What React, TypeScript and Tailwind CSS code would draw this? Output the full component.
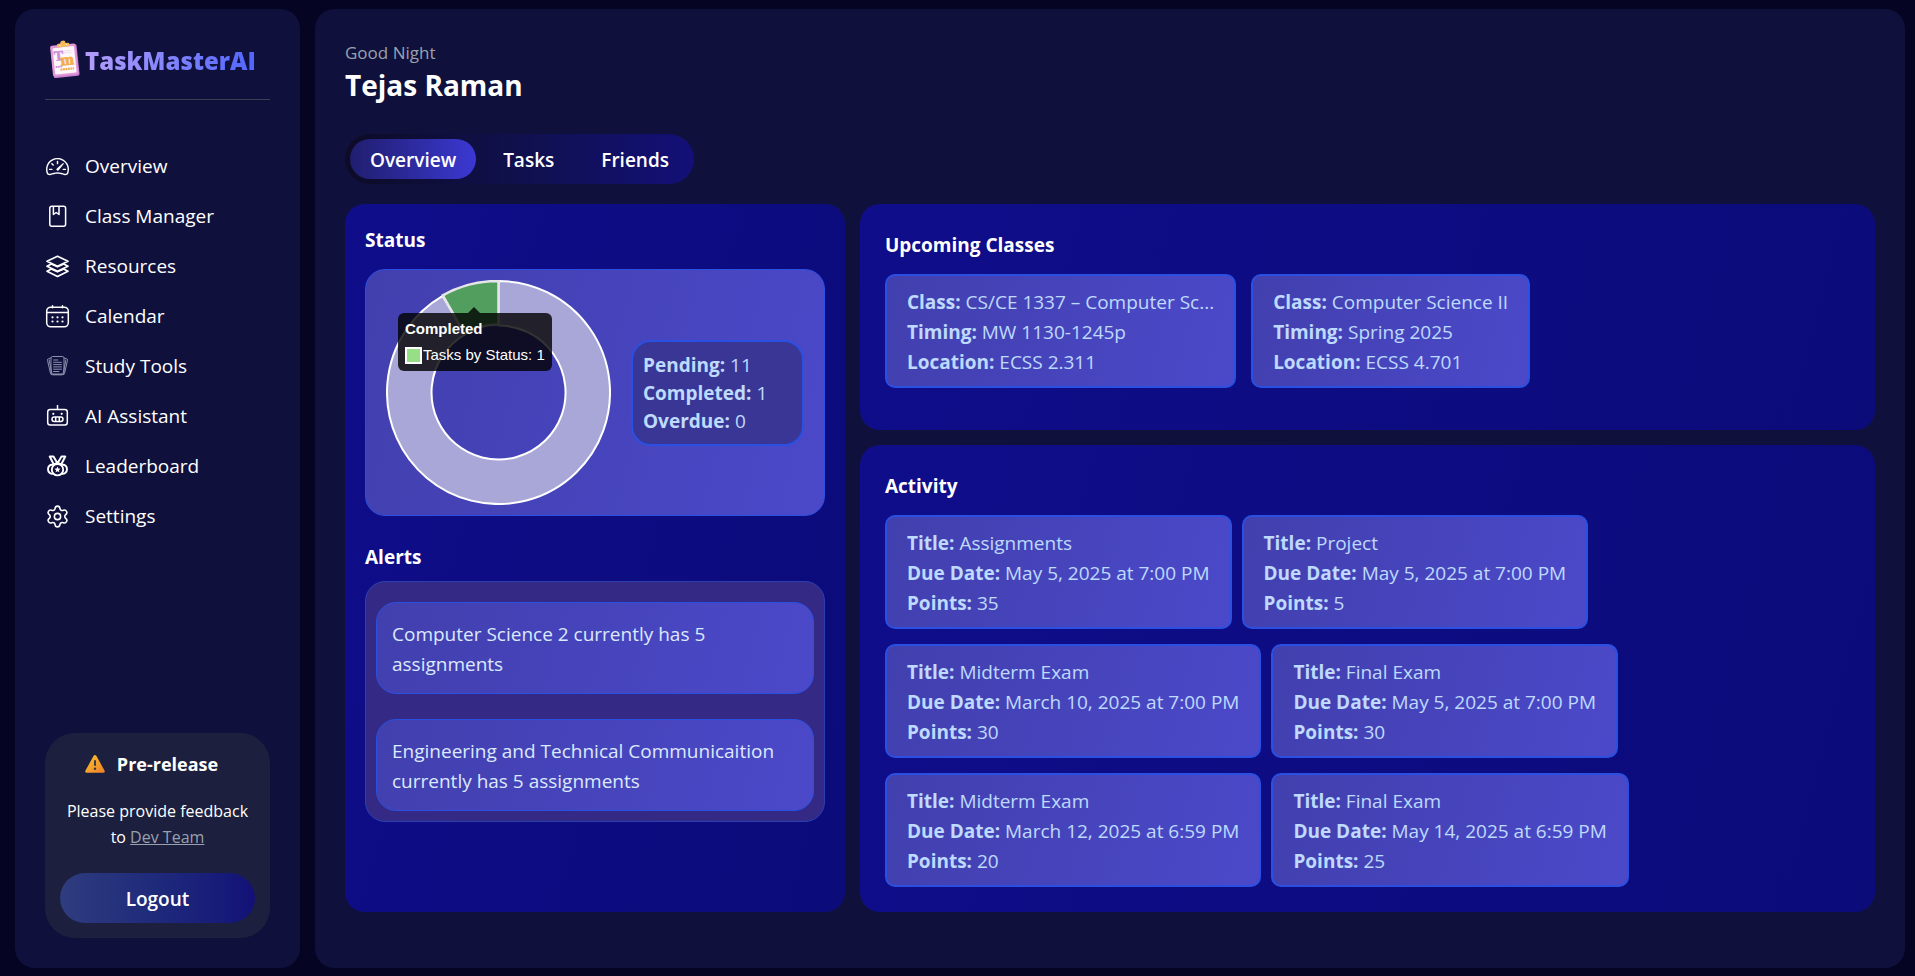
import type { ReactNode } from "react";
import { Settings } from "lucide-react";
import { BsSpeedometer2 } from "react-icons/bs";

function BookIcon() {
  return (
    <svg viewBox="0 0 25 25" className="size-[25px]" fill="none" stroke="currentColor" strokeWidth="1.5" strokeLinejoin="round">
      <rect x="4.8" y="2.3" width="15.8" height="20" rx="2" />
      <path d="M8.4 2.3v8.200l2.800-2 2.800 2V2.300" />
    </svg>
  );
}

function LayersIcon() {
  return (
    <svg viewBox="0 0 25 25" className="size-[25px]" fill="none" stroke="currentColor" strokeWidth="1.7" strokeLinejoin="round">
      <path d="M12.500 2.300 23 7.300l-10.500 5-10.500-5z" />
      <path d="M6.300 9.900 2 12.200l10.500 5 10.500-5-4.300-2.300-6.200 2.900z" />
      <path d="M6.300 14.900 2 17.200l10.500 5.200 10.500-5.200-4.300-2.300-6.200 2.900z" />
    </svg>
  );
}

function CalendarIcon() {
  return (
    <svg viewBox="0 0 25 25" className="size-[25px]" fill="none" stroke="currentColor" strokeWidth="1.5" strokeLinecap="round">
      <rect x="1.700" y="3.200" width="21.600" height="19.600" rx="4" />
      <path d="M1.700 8.400h21.600M7.500 1.700v2M17.500 1.700v2" />
      <g fill="currentColor" stroke="none">
        <circle cx="7.500" cy="13.300" r="1.100" />
        <circle cx="12.500" cy="13.300" r="1.100" />
        <circle cx="17.500" cy="13.300" r="1.100" />
        <circle cx="7.500" cy="17.500" r="1.100" />
        <circle cx="12.500" cy="17.500" r="1.100" />
        <circle cx="17.500" cy="17.500" r="1.100" />
      </g>
    </svg>
  );
}

function StudyIcon() {
  return (
    <svg viewBox="0 0 25 25" className="size-[25px] text-[#8f90ad]" fill="none" stroke="currentColor" strokeWidth="1">
      <rect x="6" y="2.500" width="13" height="17.500" rx="1.500" />
      <path d="M6 4 3.500 4.700a1.300 1.300 0 0 0-1 1.600l3 13.200a1.500 1.500 0 0 0 1.700 1.200h10.600a1.500 1.500 0 0 0 1.700-1.200l3-13.200a1.300 1.300 0 0 0-1-1.600L19 4" />
      <path d="M4 5.500 7 20M21 5.500 18 20M8 20.700h9" />
      <path d="M8.200 6h5M8.200 8.300h8.600M8.200 10.600h8.600M8.200 12.900h8.600M8.200 15.200h8.600M8.200 17.500h6" />
    </svg>
  );
}

function RobotIcon() {
  return (
    <svg viewBox="0 0 25 25" className="size-[25px]" fill="none" stroke="currentColor" strokeWidth="1.5">
      <rect x="2.700" y="5.500" width="19.600" height="15.600" rx="2.500" />
      <path d="M12.500 1v4.500" />
      <rect x="7" y="13" width="11" height="4.400" rx="2.200" />
      <path d="M10.700 13v4.400M14.300 13v4.400" />
      <g fill="currentColor" stroke="none">
        <circle cx="8.300" cy="9.800" r="1.100" />
        <circle cx="16.700" cy="9.800" r="1.100" />
      </g>
    </svg>
  );
}

function MedalIcon() {
  return (
    <svg viewBox="0 0 25 25" className="size-[25px]" fill="none" stroke="currentColor" strokeWidth="1.900" strokeLinejoin="round">
      <path d="M4.700 2.500h3.800l3.800 6.500-3.600 1.300zM20.300 2.500h-3.800L12.700 9l3.600 1.300z" />
      <circle cx="12.500" cy="15.700" r="5.700" />
      <path d="M8 10.800c-3-.6-5 1.600-5 4.400 0 2.900 2.300 5 5.300 4.600M17 10.800c3-.6 5 1.600 5 4.400 0 2.900-2.300 5-5.300 4.600" />
      <path d="m12.500 12.600.9 2 2.200.2-1.700 1.400.5 2.100-1.900-1.100-1.900 1.100.5-2.100-1.700-1.400 2.200-.2z" fill="currentColor" stroke="none" />
    </svg>
  );
}

function LogoIcon() {
  return (
    <svg viewBox="0 0 30 38" className="h-[38px] w-[30px]" aria-hidden="true">
      <g transform="rotate(-6 15 20)">
        <rect x="2" y="5" width="26" height="32" rx="2" fill="#c77fd0" />
        <rect x="1.500" y="4.500" width="25.500" height="31" rx="2" fill="#e29ad6" />
        <rect x="3.800" y="7" width="21.500" height="26.500" rx="1" fill="#fdf6fb" />
        <path d="M8.500 6.800V4.500q0-1.300 1.500-1.300h2q0-2.700 2.700-2.700t2.700 2.700h2q1.500 0 1.500 1.300v2.300z" fill="#f6b95c" />
        <circle cx="11.500" cy="4.900" r=".7" fill="#fdf0dc" />
        <circle cx="18" cy="4.900" r=".7" fill="#fdf0dc" />
        <path d="M14 13h9M14 11h8" stroke="#ecd9ee" strokeWidth=".8" />
        <text x="4.500" y="20" fontFamily="Liberation Serif, serif" fontWeight="700" fontSize="14" fill="#cf8fd8" stroke="#cf8fd8" strokeWidth=".6">T</text>
        <text x="10.500" y="25" fontFamily="Liberation Serif, serif" fontWeight="700" fontSize="16" fill="#f2ae4e" stroke="#f2ae4e" strokeWidth=".8">m</text>
        <path d="M5 26h7" stroke="#cf8fd8" strokeWidth="1.800" strokeDasharray="1.800 .5" />
        <path d="M9.500 29.200H23" stroke="#f2ae4e" strokeWidth="2.200" strokeDasharray="2 .5" />
      </g>
    </svg>
  );
}

function WarningIcon() {
  return (
    <svg viewBox="0 0 20 18" className="h-[18px] w-5" aria-hidden="true">
      <defs>
        <linearGradient id="warn" x1="0" y1="0" x2="1" y2="1">
          <stop offset="0" stopColor="#fcc62e" />
          <stop offset="1" stopColor="#ee7d2a" />
        </linearGradient>
      </defs>
      <path d="M8.500 1q1.500-2 3 0l8 14.500q1 2.300-1.300 2.300H1.800Q-.5 17.800.5 15.500z" fill="url(#warn)" />
      <rect x="9" y="5" width="2" height="6" rx="1" fill="#3a3a44" />
      <circle cx="10" cy="13.700" r="1.200" fill="#3a3a44" />
    </svg>
  );
}

const nav: { label: string; icon: ReactNode }[] = [
  { label: "Overview", icon: <BsSpeedometer2 size={23} /> },
  { label: "Class Manager", icon: <BookIcon /> },
  { label: "Resources", icon: <LayersIcon /> },
  { label: "Calendar", icon: <CalendarIcon /> },
  { label: "Study Tools", icon: <StudyIcon /> },
  { label: "AI Assistant", icon: <RobotIcon /> },
  { label: "Leaderboard", icon: <MedalIcon /> },
  { label: "Settings", icon: <Settings size={25} strokeWidth={1.5} /> },
];

const classes = [
  { Class: "CS/CE 1337 – Computer Sc...", Timing: "MW 1130-1245p", Location: "ECSS 2.311" },
  { Class: "Computer Science II", Timing: "Spring 2025", Location: "ECSS 4.701" },
];

const activity = [
  { Title: "Assignments", "Due Date": "May 5, 2025 at 7:00 PM", Points: "35" },
  { Title: "Project", "Due Date": "May 5, 2025 at 7:00 PM", Points: "5" },
  { Title: "Midterm Exam", "Due Date": "March 10, 2025 at 7:00 PM", Points: "30" },
  { Title: "Final Exam", "Due Date": "May 5, 2025 at 7:00 PM", Points: "30" },
  { Title: "Midterm Exam", "Due Date": "March 12, 2025 at 6:59 PM", Points: "20" },
  { Title: "Final Exam", "Due Date": "May 14, 2025 at 6:59 PM", Points: "25" },
];

const alerts = [
  "Computer Science 2 currently has 5 assignments",
  "Engineering and Technical Communicaition currently has 5 assignments",
];

const panel = "rounded-[20px] bg-linear-105 from-[#0f0d8a] to-[#0b0b7a]";
const card = "border-[#2b4fe0] bg-linear-105 from-[#423fae] to-[#4b49c9]";
const heading = "leading-8 font-bold";

function InfoCard({ fields }: { fields: Record<string, string> }) {
  return (
    <li className={`${card} rounded-[10px] border-2 px-5 pt-[11px] pb-[9px] text-blue-200`}>
      {Object.entries(fields).map(([name, value]) => (
        <p key={name}>
          <strong>{name}:</strong> {value}
        </p>
      ))}
    </li>
  );
}

function StatusChart() {
  return (
    <div className="relative size-[225px] shrink-0">
      <svg viewBox="0 0 225 225" className="size-full" role="img" aria-label="Tasks by Status">
        <path
          d="M112.500 1A111.500 111.500 0 1 1 56.750 15.940L79 54.500A67 67 0 1 0 112.500 45.500Z"
          fill="#a9a7d7"
          stroke="#fff"
          strokeWidth="2"
        />
        <path
          d="M56.800 15.300A112 112 0 0 1 112.500 1V44.500A68 68 0 0 0 78.500 53.600Z"
          fill="#529e5f"
          stroke="#e6e6e8"
          strokeWidth="2.500"
        />
      </svg>
      <div className="absolute top-[33px] left-3 rounded-md bg-black/80 px-[7px] py-1.5 font-['Liberation_Sans',sans-serif] text-[15px] whitespace-nowrap text-white">
        <span className="absolute -top-1.5 left-[70px] h-1.5 w-3 bg-black/80 [clip-path:polygon(50%_0,100%_100%,0_100%)]" />
        <p className="leading-5 font-bold">Completed</p>
        <p className="mt-1.5 flex items-center gap-px leading-5">
          <span className="size-[17px] border-2 border-white bg-[#96df86]" />
          Tasks by Status: 1
        </p>
      </div>
    </div>
  );
}

export default function App() {
  return (
    <div className="flex min-h-screen gap-[15px] bg-[#050523] pt-[9px] pr-2.5 pb-2 pl-[15px] font-['Open_Sans','Noto_Sans',sans-serif] text-[19px] leading-[30px] text-white">
      <aside className="flex w-[285px] shrink-0 flex-col rounded-[20px] bg-[#0f113c] p-[30px]">
        <div className="flex h-[61px] items-start gap-[5px] border-b border-[#374151] px-[5px]">
          <div className="flex h-10 items-center">
            <LogoIcon />
          </div>
          <h1 className="bg-linear-to-r from-[#b49dfb] to-[#5064ff] bg-clip-text text-2xl leading-[44px] font-extrabold text-transparent">
            TaskMasterAI
          </h1>
        </div>
        <nav className="mt-[41px]">
          <ul>
            {nav.map(({ label, icon }) => (
              <li key={label}>
                <a href="#" className="flex h-[50px] items-center gap-[15px]">
                  <span className="flex w-[25px] justify-center">{icon}</span>
                  {label}
                </a>
              </li>
            ))}
          </ul>
        </nav>
        <section className="mt-auto rounded-[30px] bg-[#1c1f3d] p-[15px] text-center">
          <h2 className="flex items-center justify-center gap-3 pr-3 text-lg leading-8 font-bold">
            <WarningIcon />
            Pre-release
          </h2>
          <p className="mt-[18px] text-base leading-[26px]">
            Please provide feedback to{" "}
            <a href="#" className="text-gray-400 underline">
              Dev Team
            </a>
          </p>
          <button type="button" className="mt-[23px] h-[50px] w-full rounded-full bg-linear-to-r from-[#2f3c7e] to-[#131077] pt-0.5 font-semibold">
            Logout
          </button>
        </section>
      </aside>

      <main className="min-w-0 flex-1 rounded-[20px] bg-[#0f113c] p-[30px]">
        <header>
          <p className="text-[17px] leading-[27px] text-gray-400">Good Night</p>
          <h2 className="text-[28px] leading-[38px] font-bold">Tejas Raman</h2>
        </header>
        <div role="tablist" className="mt-[30px] flex w-fit gap-[7px] rounded-full bg-linear-to-r from-[#0d0b27] to-[#130f78] p-[5px] font-semibold">
          <button type="button" role="tab" aria-selected="true" className="h-10 rounded-full bg-linear-to-r from-[#201e6e] to-[#3b38d4] px-5 pt-0.5">
            Overview
          </button>
          <button type="button" role="tab" aria-selected="false" className="h-10 rounded-full px-5 pt-0.5">
            Tasks
          </button>
          <button type="button" role="tab" aria-selected="false" className="h-10 rounded-full px-5 pt-0.5">
            Friends
          </button>
        </div>

        <div className="mt-5 grid grid-cols-[33fr_67fr] gap-[15px]">
          <section className={`${panel} p-5`}>
            <h3 className={heading}>Status</h3>
            <div className={`${card} mt-[13px] flex items-center gap-5 rounded-[20px] border px-5 py-2.5`}>
              <StatusChart />
              <div className="min-w-0 flex-1 rounded-[20px] border-2 border-[#2b4fe0] bg-[#393695] px-2.5 py-[9px] leading-7 text-blue-200">
                <p><strong>Pending:</strong> 11</p>
                <p><strong>Completed:</strong> 1</p>
                <p><strong>Overdue:</strong> 0</p>
              </div>
            </div>
            <h3 className={`${heading} mt-[25px]`}>Alerts</h3>
            <ul className="mt-2 flex flex-col gap-[25px] rounded-[20px] border border-[#2c3fb0] bg-[#342a86] px-2.5 pt-5 pb-2.5">
              {alerts.map((text) => (
                <li key={text} className={`${card} rounded-[20px] border px-[15px] pt-4 pb-3.5 text-blue-100`}>
                  {text}
                </li>
              ))}
            </ul>
          </section>

          <div className="flex flex-col gap-[15px]">
            <section className={`${panel} min-h-[226px] p-[25px]`}>
              <h3 className={heading}>Upcoming Classes</h3>
              <ul className="mt-[13px] flex flex-wrap gap-[15px]">
                {classes.map((fields) => (
                  <InfoCard key={fields.Class} fields={fields} />
                ))}
              </ul>
            </section>
            <section className={`${panel} flex-1 p-[25px]`}>
              <h3 className={heading}>Activity</h3>
              <ul className="mt-[13px] flex flex-wrap gap-x-2.5 gap-y-[15px]">
                {activity.map((fields, i) => (
                  <InfoCard key={i} fields={fields} />
                ))}
              </ul>
            </section>
          </div>
        </div>
      </main>
    </div>
  );
}
